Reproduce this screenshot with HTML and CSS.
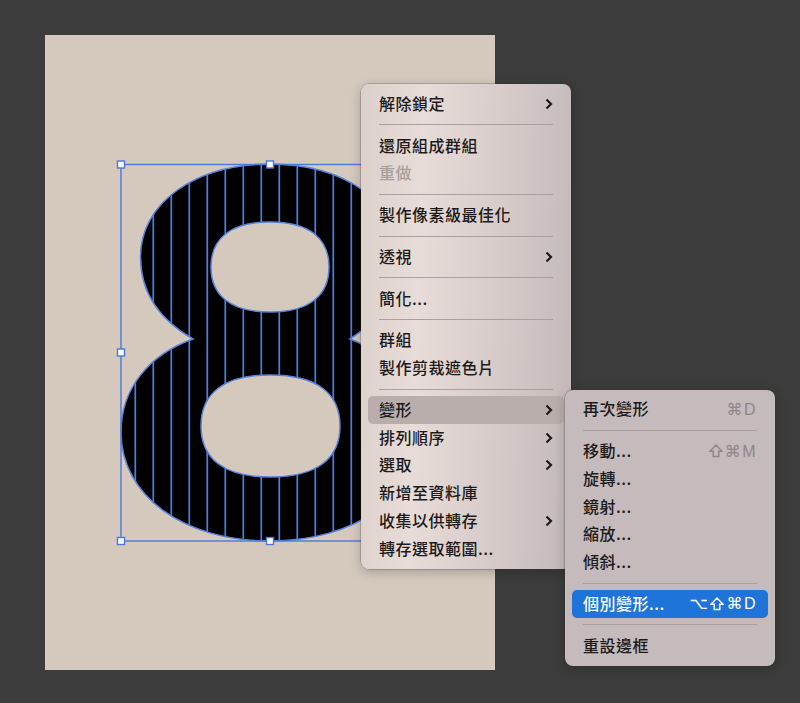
FILE: index.html
```html
<!DOCTYPE html>
<html lang="zh-Hant">
<head>
    <meta charset="UTF-8">
    <title>個別變形</title>
    <link rel="stylesheet" href="styles.css">
</head>
<body>
    <div class="artboard">
        <svg class="drawing" width="450" height="635" viewBox="45 35 450 635">
            <defs>
                <clipPath id="eight">
                    <path clip-rule="evenodd" d="M270 164C195 164 140.5 203 140.5 257C140.5 293 160 320 193 339C150 354 121 388 121 432C121 497 185 541 270 541C355 541 419 497 419 432C419 388 390 354 350 339C380 320 399.5 293 399.5 257C399.5 203 345 164 270 164ZM270 222C310 222 329 239 329 267C329 295 310 312 270 312C230 312 211 295 211 267C211 239 230 222 270 222ZM270 375C318 375 340 394 340 426C340 458 318 477 270 477C223 477 201 458 201 426C201 394 223 375 270 375Z"/>
                </clipPath>
            </defs>
            <path class="fill" fill-rule="evenodd" d="M270 164C195 164 140.5 203 140.5 257C140.5 293 160 320 193 339C150 354 121 388 121 432C121 497 185 541 270 541C355 541 419 497 419 432C419 388 390 354 350 339C380 320 399.5 293 399.5 257C399.5 203 345 164 270 164ZM270 222C310 222 329 239 329 267C329 295 310 312 270 312C230 312 211 295 211 267C211 239 230 222 270 222ZM270 375C318 375 340 394 340 426C340 458 318 477 270 477C223 477 201 458 201 426C201 394 223 375 270 375Z"/>
            <path class="slices" clip-path="url(#eight)" d="M135.300 160V545M153.300 160V545M171.300 160V545M189.300 160V545M207.300 160V545M225.300 160V545M243.300 160V545M261.300 160V545M279.300 160V545M297.300 160V545M315.300 160V545M333.300 160V545M351.300 160V545"/>
            <rect class="bounds" x="121" y="164.500" width="298" height="376.500"/>
            <rect class="handle" x="117.500" y="161" width="7" height="7"/>
            <rect class="handle" x="266.500" y="161" width="7" height="7"/>
            <rect class="handle" x="117.500" y="349" width="7" height="7"/>
            <rect class="handle" x="117.500" y="537.500" width="7" height="7"/>
            <rect class="handle" x="266.500" y="537.500" width="7" height="7"/>
        </svg>
    </div>

    <div class="menu main-menu">
        <div class="item">解除鎖定<svg class="chev" width="8" height="12" viewBox="0 0 8 12"><path d="M1.500 1.500L6 6L1.500 10.500"/></svg></div>
        <div class="sep"></div>
        <div class="item">還原組成群組</div>
        <div class="item disabled">重做</div>
        <div class="sep"></div>
        <div class="item">製作像素級最佳化</div>
        <div class="sep"></div>
        <div class="item">透視<svg class="chev" width="8" height="12" viewBox="0 0 8 12"><path d="M1.500 1.500L6 6L1.500 10.500"/></svg></div>
        <div class="sep"></div>
        <div class="item">簡化...</div>
        <div class="sep"></div>
        <div class="item">群組</div>
        <div class="item">製作剪裁遮色片</div>
        <div class="sep"></div>
        <div class="item open">變形<svg class="chev" width="8" height="12" viewBox="0 0 8 12"><path d="M1.500 1.500L6 6L1.500 10.500"/></svg></div>
        <div class="item">排列順序<svg class="chev" width="8" height="12" viewBox="0 0 8 12"><path d="M1.500 1.500L6 6L1.500 10.500"/></svg></div>
        <div class="item">選取<svg class="chev" width="8" height="12" viewBox="0 0 8 12"><path d="M1.500 1.500L6 6L1.500 10.500"/></svg></div>
        <div class="item">新增至資料庫</div>
        <div class="item">收集以供轉存<svg class="chev" width="8" height="12" viewBox="0 0 8 12"><path d="M1.500 1.500L6 6L1.500 10.500"/></svg></div>
        <div class="item">轉存選取範圍...</div>
    </div>

    <div class="menu sub-menu">
        <div class="item">再次變形<span class="keys">⌘D</span></div>
        <div class="sep"></div>
        <div class="item">移動...<span class="keys"><svg class="shift" width="14" height="14" viewBox="0 0 14 14"><path d="M7 1L13 7.200H9.800V12.500H4.200V7.200H1Z"/></svg>⌘M</span></div>
        <div class="item">旋轉...</div>
        <div class="item">鏡射...</div>
        <div class="item">縮放...</div>
        <div class="item">傾斜...</div>
        <div class="sep"></div>
        <div class="item active">個別變形...<span class="keys">⌥<svg class="shift" width="14" height="14" viewBox="0 0 14 14"><path d="M7 1L13 7.200H9.800V12.500H4.200V7.200H1Z"/></svg>⌘D</span></div>
        <div class="sep"></div>
        <div class="item">重設邊框</div>
    </div>
</body>
</html>
```

FILE: styles.css
```css
body {
    margin: 0;
    height: 703px;
    overflow: hidden;
    position: relative;
    background: #3c3c3c;
    font-family: "Noto Sans CJK TC", "Noto Sans", sans-serif;
}
.artboard {
    width: 450px;
    height: 635px;
    margin-left: 45px;
    position: relative;
    top: 35px;
    background: #d5c9be;
}
.drawing {
    display: block;
}
.fill {
    fill: #000;
    stroke: #5a84dc;
    stroke-width: 1.5;
}
.slices {
    fill: none;
    stroke: #4f7fe6;
    stroke-width: 1.7;
}
.bounds {
    fill: none;
    stroke: #4a78dc;
    stroke-width: 1.4;
}
.handle {
    fill: #fff;
    stroke: #4a78dc;
    stroke-width: 1.4;
}
.menu {
    position: absolute;
    width: 210px;
    box-sizing: border-box;
    padding: 6px 0;
    border-radius: 8px;
    box-shadow: 0 0 0 0.5px rgba(60, 50, 50, 0.45), 0 3px 12px rgba(0, 0, 0, 0.22);
}
.main-menu {
    left: 361px;
    top: 84px;
    background: linear-gradient(92deg, #dcd0cb 0%, #e8dcd8 28%, #dacecc 58%, #c3b9ba 100%);
}
.sub-menu {
    left: 565px;
    top: 389.5px;
    background: #c5babc;
}
.item {
    height: 27.75px;
    box-sizing: border-box;
    display: flex;
    align-items: center;
    margin: 0 7px;
    padding: 0 12px 2px 11px;
    border-radius: 5px;
    font-size: 16px;
    font-weight: 500;
    letter-spacing: 0.5px;
    color: #1c1a1a;
    white-space: nowrap;
}
.disabled {
    color: #a89f9c;
}
.open {
    background: #b9aeac;
}
.active {
    background: #1f74d9;
    color: #fff;
}
.sep {
    height: 1px;
    margin: 6.5px 18px;
    background: #a99f9e;
}
.chev {
    margin-left: auto;
    margin-right: -1px;
    margin-top: 2px;
    fill: none;
    stroke: #1c1a1a;
    stroke-width: 2.2;
}
.keys {
    display: flex;
    align-items: center;
    margin-left: auto;
    margin-right: -1px;
    margin-top: 2px;
    font-family: "Liberation Sans", "DejaVu Sans", sans-serif;
    font-weight: 400;
    font-size: 16px;
    letter-spacing: 1.5px;
    color: #8f8688;
}
.active .keys {
    color: #fff;
}
.shift {
    margin: 0 2px 0 1px;
    fill: none;
    stroke: currentColor;
    stroke-width: 1.4;
}
```
